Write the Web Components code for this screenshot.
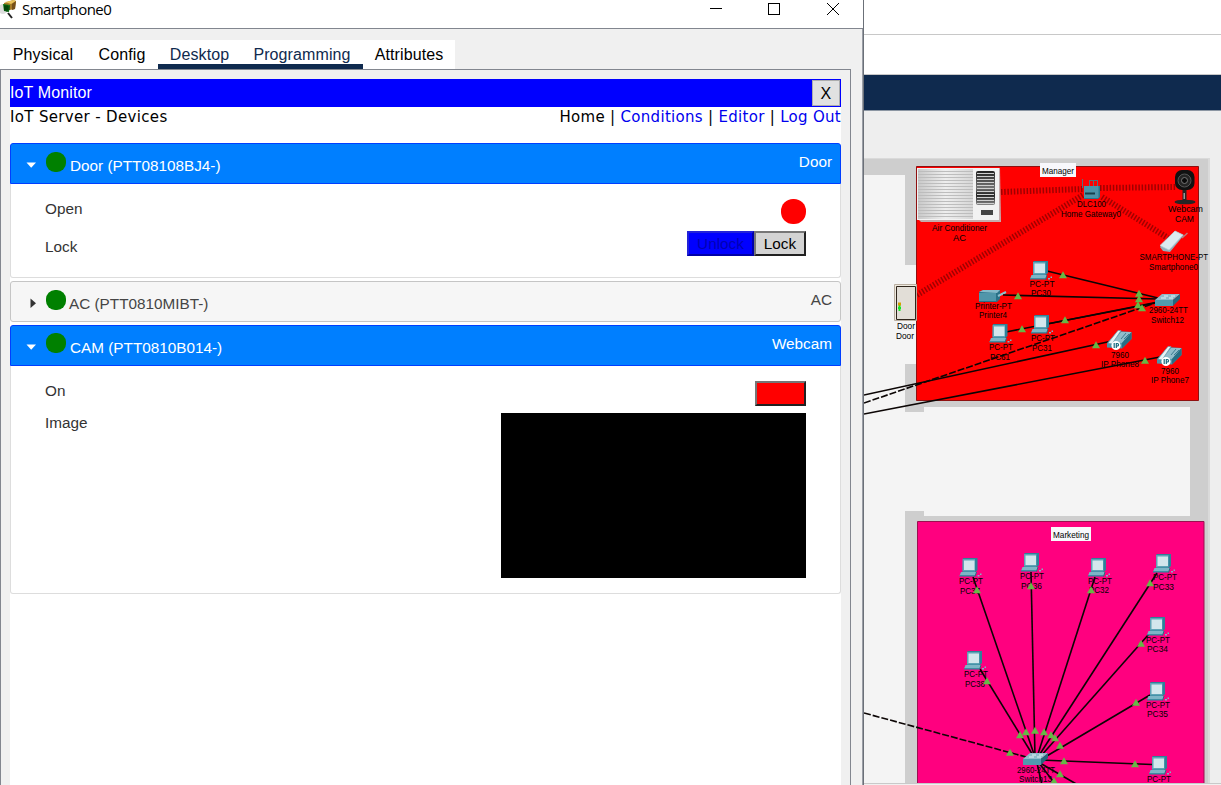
<!DOCTYPE html>
<html lang="en">
<head>
<meta charset="utf-8">
<title>Smartphone0</title>
<style>
html,body{margin:0;height:100%;overflow:hidden;background:#fff;font-family:"Liberation Sans",Arial,sans-serif;font-size:16px;color:#000}
</style>
</head>
<body>
<app-shell>
  <device-window slot="window" heading="Smartphone0">
    <window-tabs slot="tabs"></window-tabs>
    <iot-monitor>
      <device-section state="open" name="Door (PTT08108BJ4-)" kind="Door" style="--body:93px">
        <device-row label="Open" style="--h:38px;--lt:9px"><state-light></state-light></device-row>
        <device-row label="Lock" style="--h:38px;--lt:9px;--vt:-6px"><push-button look="on" style="--w:67px">Unlock</push-button><push-button style="--w:52px">Lock</push-button></device-row>
      </device-section>
      <device-section state="closed" name="AC (PTT0810MIBT-)" kind="AC" style="--tx:2px"></device-section>
      <device-section state="open" name="CAM (PTT0810B014-)" kind="Webcam" style="--body:227px;--dot:7px">
        <device-row label="On" style="--h:32px;--lt:9px"><push-button look="red" style="--w:51px"></push-button></device-row>
        <device-row label="Image" style="--h:180px;--lt:9px"><camera-feed></camera-feed></device-row>
      </device-section>
    </iot-monitor>
  </device-window>
  <workspace-view slot="workspace"></workspace-view>
</app-shell>
<script>
const define=(name,html,setup)=>customElements.define(name,class extends HTMLElement{
  constructor(){super();this.attachShadow({mode:'open'})}
  connectedCallback(){this.shadowRoot.innerHTML=html;if(setup)setup(this,this.shadowRoot)}
});

define('app-shell',`<style>:host{display:grid;grid-template-columns:864px 1fr;height:785px;width:1221px;overflow:hidden}</style>
<slot name="window"></slot><slot name="workspace"></slot>`);

define('device-window',`<style>
:host{display:flex;flex-direction:column;height:785px;box-sizing:border-box;border-right:1px solid #6b7078;background:#f0f0f0;min-width:0}
header{height:28px;background:#fff;border-bottom:1px solid #82868f;display:flex;flex:none}
.logo{width:20px;height:20px;flex:none}
h1{margin:-1px auto 0 2px;font:400 15px/20px "Open Sans",sans-serif;letter-spacing:-.58px;white-space:nowrap}
.ctl{width:126px;height:20px;margin-right:20px}
.body{flex:1;display:flex;flex-direction:column;border-right:1px solid #9a9ea6;padding-top:11px;min-height:0}
main{flex:1;box-sizing:border-box;border:1px solid #82868f;border-bottom:0;width:851px;padding:9px 9px 0 9px;min-height:0}
</style>
<header><svg class="logo" viewBox="0 0 20 20"><circle cx="3" cy="9" r="5" fill="#ddd"/><path d="M4 3l9-3 3 1-1 8-11 2z" fill="#a67b27"/><path d="M5 2l9-2 2 1-5 3z" fill="#e9c35c"/><path d="M12 4l4-3-1 8-3 1z" fill="#765019"/><path d="M3 4l7 1-1 7-5-1z" fill="#0b7415"/><path d="M5 5v6M7 5v7M4 7h6M4 9h6" stroke="#022f07" stroke-width=".8"/><path d="M8 13l4 5" stroke="#222" stroke-width="2"/></svg>
<h1></h1><svg class="ctl" viewBox="0 0 126 20" fill="none" stroke="#000" shape-rendering="crispEdges"><path d="M-7 8.500h12M51.500 3.500h11v11h-11z"/><path d="M110 3l12 12M122 3l-12 12" shape-rendering="auto"/></svg></header>
<div class="body"><slot name="tabs"></slot><main><slot></slot></main></div>`,
(el,r)=>{r.querySelector('h1').textContent=el.getAttribute('heading');r.querySelector('.ctl').style.overflow='visible'});

define('window-tabs',`<style>
:host{display:flex;width:455px;height:29px;background:#fff;flex:none}
span{box-sizing:border-box;height:29px;line-height:29px;text-align:center;white-space:nowrap;letter-spacing:.1px}
.on{color:#0f2a4e;border-bottom:5px solid #0f2a4e}
</style><span style="width:86px">Physical</span><span style="width:72px">Config</span><span class="on" style="width:83px">Desktop</span><span class="on" style="width:122px">Programming</span><span style="width:92px">Attributes</span>`);

define('iot-monitor',`<style>
:host{display:flex;flex-direction:column;height:100%;background:#fff;width:831px}
.bar{height:28px;background:#00f;color:#fff;display:flex;justify-content:space-between;flex:none;line-height:28px;box-sizing:border-box;padding-right:1px;letter-spacing:.12px}
.bar b{font-weight:400;color:#000;background:#e1e1e1;border:1px solid #adadad;box-sizing:border-box;width:28px;height:26px;margin-top:1px;line-height:25px;text-align:center}
nav{display:flex;justify-content:space-between;height:36px;font:15px/20px "DejaVu Sans",Verdana,sans-serif;letter-spacing:.34px;flex:none;white-space:pre}
.links{letter-spacing:.3px}
a{color:#00e}
.list{display:flex;flex-direction:column;gap:3px}
</style>
<div class="bar"><span>IoT Monitor</span><b>X</b></div>
<nav><span>IoT Server - Devices</span><span class="links">Home | <a>Conditions</a> | <a>Editor</a> | <a>Log Out</a></span></nav>
<div class="list"><slot></slot></div>`);

define('device-section',`<style>
:host{display:block;font-size:15.3px}
.head{height:41px;box-sizing:border-box;border:1px solid #003eff;border-radius:3px 3px 0 0;background:#007fff;color:#fff;display:flex;align-items:flex-start}
.head.closed{background:#f6f6f6;border-color:#c5c5c5;color:#454545;border-radius:3px}
svg{width:10px;height:10px;margin:16px 10px 0 15px;flex:none}
i{width:20px;height:20px;border-radius:9px;background:#008000;margin-top:var(--dot,8px)}
.name{margin:12px auto 0 calc(5px - var(--tx,1px));line-height:20px}
.kind{margin:8px 8px 0 0;line-height:20px}
.body{height:var(--body);border:1px solid #ddd;border-top:0;border-radius:0 0 3px 3px;padding:0 34px;color:#333;overflow:hidden}
.body>div{padding-top:15px}
</style><div class="head"><svg viewBox="0 0 10 10"></svg><i></i><span class="name"></span><span class="kind"></span></div><div class="body"><div><slot></slot></div></div>`,
(el,r)=>{const open=el.getAttribute('state')==='open';
r.querySelector('.name').textContent=el.getAttribute('name');r.querySelector('.kind').textContent=el.getAttribute('kind');
r.querySelector('svg').innerHTML=open?'<path d="M.500 2.500h9.500L5.200 7.800z" fill="#fff"/>':'<path d="M4.500 .500v9.500L10 5.200z" fill="#333"/>';
if(!open){r.querySelector('.head').classList.add('closed');r.querySelector('.body').remove()}});

define('device-row',`<style>
:host{display:flex;justify-content:space-between;height:var(--h)}
.l{line-height:20px;margin-top:calc(var(--lt) - 9px)}
.v{display:flex;margin-top:var(--vt,0px)}
</style><span class="l"></span><span class="v"><slot></slot></span>`,(el,r)=>r.querySelector('.l').textContent=el.getAttribute('label'));

define('state-light',`<style>:host{width:25px;height:25px;border-radius:12px;background:red}</style>`);
define('camera-feed',`<style>:host{width:305px;height:165px;background:#000}</style>`);
define('push-button',`<style>
:host{box-sizing:border-box;width:var(--w);height:25px;border:2px solid;border-color:#767676 #212121 #212121 #767676;background:#d3d3d3;color:#000;text-align:center;line-height:21px}
:host([look=on]){background:#00f;color:#0000b4;border-color:#2222d8 #0000a8 #0000a8 #2222d8}
:host([look=red]){background:red}
</style><slot></slot>`);

/* Workspace: device positions on the free canvas, in page units */
const pcs=[[1030,261],[1031,315],[989.5,324],[959.5,558],[1021,553],[1088,558],[1153,554],[1147,617],[964,651],[1147,682],[1149,756]];
const labels=[
['Manager',1042,173.500,32],['Air Conditioner',932,231,55],['AC',953,241,13],['DLC100',1077,207,29],['Home Gateway0',1061,217,60],
['Webcam',1168,212,35],['CAM',1175,222,19],['SMARTPHONE-PT',1139.500,260,68.500],['Smartphone0',1149,270,49],
['PC-PT',1029.500,287,25],['PC30',1031,296,20],['Printer-PT',975,309,37],['Printer4',979,318,28],['PC-PT',1031,341,24],['PC31',1032,351,20],
['PC-PT',989,350,24],['PC61',990,360,20],['2960-24TT',1149,313,39],['Switch12',1151,323,33],['7960',1111,358,18],['IP Phone8',1101,367,38],
['7960',1161,374,18],['IP Phone7',1151,383,38],['Door',897,329,18],['Door',896,339,18],['Marketing',1053,537.500,36],
['PC-PT',959,584,24],['PC37',960,594,20],['PC-PT',1020,579,24],['PC36',1021,589,21],['PC-PT',1088,584,24],['PC32',1089,593,20],
['PC-PT',1153,580,24],['PC33',1153,590,21],['PC-PT',1146,643,24],['PC34',1147,652,21],['PC-PT',964,677,24],['PC38',965,687,20],
['PC-PT',1146,708,24],['PC35',1147,717,21],['PC-PT',1147,782,24],['2960-24TT',1017,773,38],['Switch13',1019,782,33]];
const cables=[[1047,271,1158,298],[1003,295,1158,299],[1047,324,1158,302],[1006,332,1158,302.500],[864,395,1112,341],[864,414,1160,357],
[973,577,1035,757],[1031,572,1035,757],[1095,577,1037,757],[1157,573,1038,757],[1149,634,1040,757],[980,669,1034,757],[1150,695,1040,760],[1152,764.500,1040,760],[1040,763,1078,785],[1039,763,1056,785],[1037,763,1042,785]];
const dashed=[[864,403,1158,302],[864,713,1030,758]];
const radio=[[1001,192,1083,189],[1100,188,1176,187],[1102,197,1168,238],[917,295,1083,195]];
const lights=[[1063,275],[1018,296],[1065,320],[1022,329],[1139,293.500],[1139,299],[1138,305],[1142,308],[1096,345],[1145,360.500],
[977,590],[1031,586],[1091,590],[1150,583],[1141,643.500],[987,681],[1136,702.500],[1135,764],[1020,735],[1026,732],[1035,730.500],[1044,732],[1051,735],[1055,738],[1060,745.500],[1064,761],[1010,752.500],[1060,774],[1054,781]];
const line=(a,x='')=>`<path d="M${a[0]} ${a[1]}L${a[2]} ${a[3]}" ${x}/>`;
const use=(id,x,y)=>`<use href="#${id}" x="${x}" y="${y}"/>`;
const slats=(x,y,w,n,s,c)=>Array.from({length:n},(_,i)=>`<path d="M${x} ${y+i*s}h${w}" stroke="${c}"/>`).join('');
define('workspace-view',`<style>
:host{display:flex;flex-direction:column;width:357px;height:785px;background:#fff;overflow:hidden}
.t1{height:34px;border-bottom:1px solid #c8c8c8;flex:none}.t2{height:39px;border-bottom:1px solid #c8c8c8;flex:none}
.navy{height:35px;background:#0f2a4e;border-bottom:1px solid #8c96a3;flex:none}
svg{display:block;flex:none;width:357px;height:674px}
text{font:9.800px "Liberation Sans",Arial,sans-serif;fill:#000}
</style><div class="t1"></div><div class="t2"></div><div class="navy"></div><svg viewBox="864 111 357 674"></svg>`,
(el,r)=>{r.querySelector('svg').innerHTML=`
<defs>
<g id="pc"><path d="M3.500 0H18v12l-2 2H3z" fill="#2d8299"/><path d="M3 1h12.500v12.500H3z" fill="#5fa3b6"/><path d="M4.500 2.500h10.500v9.500h-10.500z" fill="#d3e6ec"/><path d="M1.500 14H17l-1.500 4H0z" fill="#7db5c6"/><path d="M0 17.200h15.500V18.500H0z" fill="#2d8299"/><path d="M17 14l-1.500 4.500" stroke="#246e82"/><path d="M18 17h2v1.500h-2zM20.500 15.500h1.500v1.500h-1.500z" fill="#7db5c6"/></g>
<g id="sw"><path d="M0 6L7 0h18l-7 6z" fill="#8fbccb"/><path d="M0 6h18v6H0z" fill="#5299ae"/><path d="M18 6l7-6v5l-7 7z" fill="#24697e"/><path d="M6 4h5M9 2h4M14 4h4M16 2h4" stroke="#e3f1f5"/></g>
<g id="ph"><path d="M0 13L11 1l13.500 1v7l-9.500 9.500-15-1z" fill="#4b93a8"/><path d="M6 12l8-10 10.500 0-9.500 11z" fill="#91bdcb"/><path d="M24.500 2v7l-9.500 9.500v-5.500z" fill="#286e84"/><path d="M1 13L11 .500l3 0L5 14z" fill="#e7f2f5" stroke="#6c9aab" stroke-width=".7"/><path d="M14 9l5-6M17 9l5-5" stroke="#3d7c92"/><circle cx="9" cy="15.500" r="4.600" fill="#fff"/><path d="M7.200 13v5M9.300 18v-4.500h1a1.200 1.200 0 0 1 0 2.500h-1" stroke="#176a7f" stroke-width="1.200" fill="none"/></g>
<path id="up" d="M-4 3.300L0-3.700 4 3.300z" fill="#66b845"/>
<linearGradient id="ac"><stop stop-color="#c9c9c9"/><stop offset=".5" stop-color="#eee"/><stop offset="1" stop-color="#d6d6d6"/></linearGradient>
<linearGradient id="vent" x2="0" y2="1"><stop stop-color="#222"/><stop offset=".5" stop-color="#777"/><stop offset=".7" stop-color="#222"/><stop offset="1" stop-color="#888"/></linearGradient>
</defs>
<path d="M864 111h357v674H864z" fill="#eee"/>
<path d="M864 158h346v627H864z" fill="#dadada"/><path d="M864 159h344v626H864z" fill="#cecece"/>
<path d="M864 175h41v610h-41zM864 265h53v99h-53zM864 412h60v99h-60zM924 407h266v109H924z" fill="#f4f4f4"/>
<path d="M916.500 166.500h282v234h-282z" fill="red" stroke="#8f1010"/>
<path d="M917.500 521.500h286.500v262h-286.500z" fill="#ff007f" stroke="#99104f"/>
<g stroke="#a00000" stroke-width="6" stroke-dasharray="1.500 1.700">${radio.map(a=>line(a)).join('')}</g>
<path d="M1040 163h36v14h-36zM1051 527h40v14h-40z" fill="#f8f8fc"/>
<path d="M919 169l81-1 1 54h-80l-3-3z" fill="#c5aaaa"/><path d="M917 168h82v52h-82z" fill="#f2f2f2"/><path d="M918 169h55v50h-55z" fill="url(#ac)"/>${slats(918,171.500,55,16,3,'#bdbdbd')}
<rect x="976" y="171" width="19" height="34" rx="2" fill="url(#vent)"/>${slats(977,173.500,17,11,3,'#d0d0d0')}<path d="M981 210h12v5h-12z" fill="#444"/>
<path d="M894.500 284.500h22v36h-22z" fill="#eee9df" stroke="#b9aea0"/><path d="M896.500 286.500h19v33h-19z" fill="#e2ded7" stroke="#2f251b"/><path d="M899.500 305v6M898 308h3" stroke="#16e823" stroke-width="2"/><path d="M898 302.500h3v3h-3z" fill="#d4a000"/>
<path d="M1084 186h16v11l-2 2h-14z" fill="#26768c"/><path d="M1084 186h14.500v12h-14.500z" fill="#4c93a8"/><path d="M1085 193.500h10" stroke="#173f4b" stroke-width="2"/><path d="M1082.500 179v9M1089.500 180v6M1093.500 180v6M1097.500 180v6M1089 180.500h9" stroke="#56707b"/>
<path d="M1182.500 187h4v13h-4z" fill="#242424"/><path d="M1183.500 193h1.500v6h-1.500z" fill="#999"/><ellipse cx="1185" cy="202" rx="10.500" ry="2.300" fill="#252525"/><rect x="1175" y="170" width="19.500" height="20" rx="7" fill="#111"/><circle cx="1184.500" cy="180.500" r="6.500" fill="#242424" stroke="#555"/><circle cx="1184.500" cy="180.500" r="3" fill="#090909" stroke="#777"/>
<path d="M1160 247l15-16 9 4-14 17-7-1z" fill="#91afba"/><path d="M1160 245.500l15-14.500 8 4-14 15z" fill="#dceaf0" stroke="#b9cdd5" stroke-width=".7"/><path d="M1182 238l5.500-5" stroke="#b98080" stroke-width="1.300"/>
<path d="M979 292l4-2h17v9l-3 3h-18z" fill="#287187"/><path d="M979 293h17v8h-17z" fill="#5096aa"/><path d="M979 292l4-2h17l-3 3z" fill="#85bac9"/><path d="M998 296l8-4" stroke="#8fc0ce" stroke-width="2"/>
<g>${labels.map(([t,x,y,w])=>`<text x="${x}" y="${y}" textLength="${w}" lengthAdjust="spacingAndGlyphs">${t}</text>`).join('')}</g>
<g stroke="#0b0504" stroke-width="1.600">${cables.map(a=>line(a)).join('')}${dashed.map(a=>line(a,'stroke-dasharray="7 2"')).join('')}</g>
${pcs.map(p=>use('pc',...p)).join('')}${use('sw',1155,294)}${use('sw',1023,753)}${use('ph',1107,330)}${use('ph',1157,346)}
${lights.map(p=>use('up',...p)).join('')}
<path d="M864 783h357v2H864z" fill="#f0f0f0"/><path d="M864 783.500h357" stroke="#c9c9c9"/>`});
</script>
</body>
</html>
